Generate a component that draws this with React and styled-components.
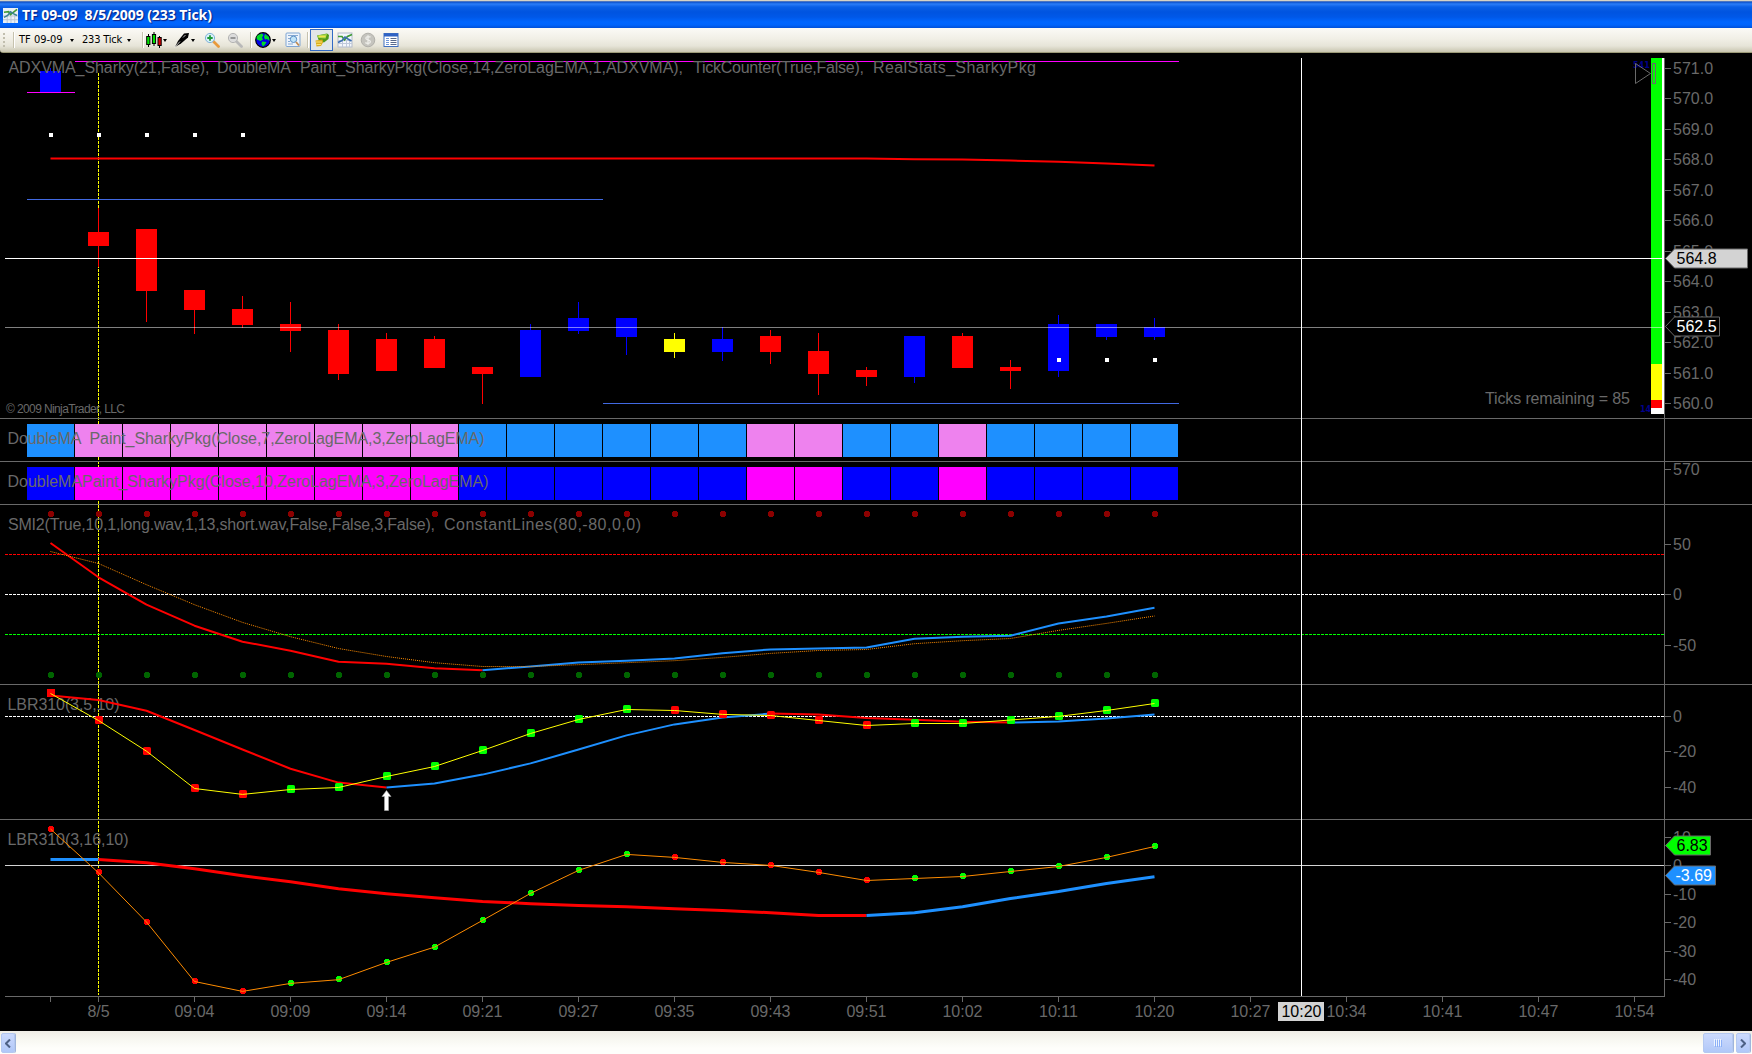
import React from "react";
import styled, { createGlobalStyle } from "styled-components";

const GlobalStyle = createGlobalStyle`
  body {
    margin: 0;
    background: #000;
    overflow: hidden;
    font-family: "Liberation Sans", Arial, sans-serif;
  }
`;

const GRAY = "#696969";
const BLUE = "#1e90ff";
const LIME = "#00ff00";

const Window = styled.div`
  display: flex;
  flex-direction: column;
  width: 1752px;
  height: 1054px;
  background: #000;
`;

const TitleBar = styled.header`
  display: flex;
  align-items: center;
  box-sizing: border-box;
  height: 28px;
  padding: 1px 0 0 3px;
  border-top: 1px solid #d6d3c6;
  background: linear-gradient(
    180deg,
    #8a99b8 0,
    #0d50c8 1px,
    #2b7df8 3px,
    #0a5fe6 6px,
    #0054e0 11px,
    #0058e8 16px,
    #0066ff 21px,
    #0064fc 24px,
    #0050d8 27px
  );
`;

const Title = styled.h1`
  margin: 0 0 0 4px;
  color: #fff;
  font-family: "Open Sans", "Noto Sans", sans-serif;
  font-size: 14px;
  font-weight: 700;
  line-height: 26px;
  letter-spacing: -0.07px;
  white-space: pre;
  text-shadow: 1px 1px 1px #0a1f80;
`;

const ToolBar = styled.nav`
  display: flex;
  align-items: center;
  box-sizing: border-box;
  height: 25px;
  padding-left: 3px;
  border-bottom: 1px solid #9c9a78;
  border-radius: 0 0 0 3px;
  background: linear-gradient(180deg, #fbfaf6 0, #f1efe6 45%, #e6e4d8 75%, #c9c6b0 100%);
`;

const Grip = styled.i`
  width: 2px;
  height: 15px;
  background: repeating-linear-gradient(180deg, #c1beae 0 2px, transparent 2px 4px);
`;

const Separator = styled.i`
  width: 1px;
  height: 16px;
  margin: 0 ${(p) => p.$right || 3}px 0 ${(p) => p.$left || 3}px;
  background: #c6c2ae;
  box-shadow: 1px 0 0 #fff;
`;

const ToolText = styled.span`
  width: ${(p) => p.$width}px;
  color: #000;
  font-family: "DejaVu Sans Condensed", "DejaVu Sans", sans-serif;
  font-size: 11px;
  line-height: 22px;
  letter-spacing: ${(p) => p.$spacing || 0}px;
  white-space: nowrap;
`;

const Caret = styled.i`
  width: 0;
  height: 0;
  margin: 1px ${(p) => p.$right}px 0 ${(p) => p.$left}px;
  border: 2.5px solid transparent;
  border-top: 3px solid #000;
  border-bottom: 0;
`;

const ToolButton = styled.span`
  display: flex;
  align-items: center;
  justify-content: center;
  box-sizing: border-box;
  width: ${(p) => (p.$active ? 23 : 17)}px;
  height: 22px;
  margin-right: ${(p) => p.$gap || 0}px;
  border: ${(p) => (p.$active ? "1px solid #316ac5" : "0")};
  background: ${(p) => (p.$active ? "#e1e6e8" : "none")};
`;

const Panels = styled.main`
  display: flex;
  flex-direction: column;
`;

const PanelRow = styled.section`
  display: flex;
  height: ${(p) => p.$height}px;
`;

const Canvas = styled.svg`
  display: block;
  flex: none;
`;

const Label = styled.text`
  fill: ${(p) => p.$color || GRAY};
  font-size: ${(p) => p.$size || 16}px;
  white-space: pre;
`;

const TinyLabel = styled.text`
  fill: #00008b;
  font-family: "DejaVu Sans", sans-serif;
  font-size: 8px;
  font-weight: 700;
`;

const ScrollBar = styled.footer`
  display: flex;
  align-items: center;
  box-sizing: border-box;
  height: 23px;
  padding: 1px 2px 0 1px;
  background: linear-gradient(180deg, #efede6 0, #f8f8f2 40%, #fefefb 75%);
`;

const ScrollPart = styled.span`
  display: flex;
  align-items: center;
  justify-content: center;
  box-sizing: border-box;
  width: ${(p) => p.$width}px;
  height: 20px;
  margin-left: ${(p) => p.$push || "0"};
  border: 1px solid #b4c8f0;
  border-radius: 2px;
  background: linear-gradient(180deg, #cbdafd, #bccffa 60%, #b0c8f8);
  box-shadow: 1px 0 0 #9fb5dc;
`;

// every bar is 48px apart
const barX = (i) => 50.5 + 48 * i;

// colour, body top, body bottom, high, low
const candles = [
  ["blue", 71, 92, 68, 92],
  ["red", 232, 246, 208, 267],
  ["red", 229, 291, 229, 322],
  ["red", 290, 310, 290, 334],
  ["red", 309, 325, 296, 328],
  ["red", 324, 331, 302, 352],
  ["red", 330, 374, 324, 380],
  ["red", 339, 371, 333, 371],
  ["red", 339, 368, 336, 368],
  ["red", 367, 374, 367, 404],
  ["blue", 330, 377, 324, 377],
  ["blue", 318, 331, 302, 334],
  ["blue", 318, 337, 318, 355],
  ["yellow", 339, 352, 333, 358],
  ["blue", 339, 352, 327, 361],
  ["red", 336, 352, 330, 364],
  ["red", 351, 374, 333, 395],
  ["red", 370, 377, 367, 386],
  ["blue", 336, 377, 336, 383],
  ["red", 336, 368, 333, 368],
  ["red", 367, 371, 360, 389],
  ["blue", 324, 371, 315, 377],
  ["blue", 324, 337, 324, 340],
  ["blue", 327, 337, 318, 340],
];

const average = [
  ...Array(18).fill(158.5),
  159.2, 159.5, 160.5, 161.8, 163.6, 165.5,
];

const paint = "BPPPPPPPPBBBBBBPPBBPBBBB".split("");
const dotColor = (i) => (i < 5 || (i > 12 && i < 18) ? "#ff0000" : LIME);

const smi = [
  543, 577.3, 604.7, 625.7, 641.7, 650.7, 661.7, 663.7, 668.3, 670.3, 666.4, 662.4,
  660.7, 658.5, 653.3, 649.4, 648.5, 647.4, 638.7, 636.7, 635.7, 623.5, 616.4, 607.7,
];
const smiAverage = [
  551.5, 563.5, 584.7, 604.7, 622.4, 636.7, 648.5, 656.5, 662.7, 666.5, 666.5, 664.7,
  662.7, 660.7, 657.4, 653.4, 650.5, 649.5, 643.7, 640.7, 638.5, 630.4, 623.4, 616,
];
const fast5 = [
  693.5, 720.5, 751.2, 788.5, 794.4, 789.5, 787.5, 776.5, 766.5, 750.5, 733.5, 719.5,
  709.5, 710.5, 714.4, 715.5, 720.5, 725.5, 723.5, 723.5, 720, 716.4, 710.5, 703.5,
];
const slow5 = [
  695.5, 700, 710.7, 730, 749.5, 768.7, 782.6, 787.5, 783.6, 774.6, 763.4, 749.5,
  735.4, 724.4, 717.6, 713.6, 714.6, 718, 719.7, 721.7, 722.6, 721.4, 718.5, 714.6,
];
const fast16 = [
  829, 872.8, 922, 981.5, 991.4, 983.4, 979.7, 962.4, 947.1, 920.4, 893.4, 870.4,
  854.4, 857.4, 862.4, 865.4, 872.4, 880.5, 878.5, 876.5, 871.5, 866.5, 857.4, 846.5,
];
const slow16 = [
  859.5, 859.5, 862.7, 868.7, 875.7, 881.7, 888.7, 893.7, 897.7, 901.4, 903.7, 905.5,
  906.7, 908.7, 910.5, 912.7, 915.5, 915.5, 912.7, 906.7, 898.5, 891.5, 883.4, 876.7,
];

const Series = ({ values, from = 0, to = 23, color, width = 1, dash }) => (
  <polyline
    points={values
      .slice(from, to + 1)
      .map((y, i) => `${barX(from + i)},${y}`)
      .join(" ")}
    fill="none"
    stroke={color}
    strokeWidth={width}
    strokeDasharray={dash}
    strokeLinejoin="round"
  />
);

const HLine = ({ y, x1 = 5, x2 = 1664, color, dash }) => (
  <line
    x1={x1}
    x2={x2}
    y1={y + 0.5}
    y2={y + 0.5}
    stroke={color}
    strokeDasharray={dash ? "3 1" : undefined}
    shapeRendering="crispEdges"
  />
);

const Dot = ({ i, y, color }) => (
  <circle cx={barX(i) + 0.5} cy={y} r="3" fill={color} shapeRendering="crispEdges" />
);

const Dots = ({ y, color }) => smi.map((_, i) => <Dot key={i} i={i} y={y} color={color} />);

// parts: [text, x, width]
const Caption = ({ y, parts }) =>
  parts.map(([text, x, width]) => (
    <Label key={x} x={x} y={y} textLength={width}>
      {text}
    </Label>
  ));

const Tag = ({ y, right, fill, color, text, x = 1677 }) => (
  <g>
    <path
      d={`M1665.5 ${y}L1674.5 ${y - 9.5}H${right}V${y + 9.5}H1674.5Z`}
      fill={fill}
      stroke={GRAY}
    />
    <Label x={x - 0.5} y={y + 5.5} $color={color}>
      {text}
    </Label>
  </g>
);

const Panel = ({ top, height, ticks = [], tags, last, children }) => (
  <PanelRow $height={height}>
    <Canvas width="1665" height={height} viewBox={`0 ${top} 1665 ${height}`}>
      <line
        x1="98.5"
        x2="98.5"
        y1="73"
        y2="995"
        stroke="#ffff00"
        strokeDasharray="3 1"
        shapeRendering="crispEdges"
      />
      {children}
      <HLine y={top + height - 1} x1={last ? 5 : 0} x2={1665} color={GRAY} />
      <path d="M1301.5 58V996" stroke="#fff" />
      <path d="M1664.5 58V997" stroke={GRAY} />
    </Canvas>
    <Canvas width="87" height={height} viewBox={`1665 ${top} 87 ${height}`}>
      {ticks.map(([text, y]) => (
        <g key={y}>
          <HLine y={y} x1={1665} x2={1671} color={GRAY} />
          <Label x="1673" y={y + 6}>
            {text}
          </Label>
        </g>
      ))}
      {!last && <HLine y={top + height - 1} x1={1665} x2={1752} color={GRAY} />}
      {tags}
    </Canvas>
  </PanelRow>
);

const priceTicks = [68, 98, 129, 159, 190, 220, 251, 281, 312, 342, 373, 403].map((y, i) => [
  `${571 - i}.0`,
  y,
]);

const PricePanel = () => (
  <Panel
    top={53}
    height={366}
    ticks={priceTicks}
    tags={
      <>
        <Tag y={258.5} right={1747.5} fill="#d3d3d3" color="#000" text="564.8" />
        <Tag y={326.5} right={1719.5} fill="#000" color="#fff" text="562.5" />
      </>
    }
  >
    {candles.map(([color, open, close, high, low], i) => (
      <g key={i} fill={color} shapeRendering="crispEdges">
        <rect x={barX(i) - 0.5} y={high} width="1" height={low - high} />
        <rect x={barX(i) - 10.5} y={open} width="21" height={close - open} />
      </g>
    ))}
    <HLine y={61} x1={75} x2={1179} color="#ff00ff" />
    <HLine y={92} x1={27} x2={75} color="#ff00ff" />
    <HLine y={199} x1={27} x2={603} color="#4169e1" />
    <HLine y={403} x1={603} x2={1179} color="#4169e1" />
    <Series values={average} color="#ff0000" width={2} />
    {[0, 1, 2, 3, 4].map((i) => (
      <rect key={i} x={barX(i) - 1.5} y="133" width="4" height="4" fill="#fff" />
    ))}
    {[21, 22, 23].map((i) => (
      <rect key={i} x={barX(i) - 1.5} y="358" width="4" height="4" fill="#fff" />
    ))}
    <Caption
      y={73}
      parts={[
        ["ADXVMA_Sharky(21,False),", 8.5, 201],
        ["DoubleMA", 217, 74],
        ["Paint_SharkyPkg(Close,14,ZeroLagEMA,1,ADXVMA),", 300, 383],
        ["TickCounter(True,False),", 693, 171],
        ["RealStats_SharkyPkg", 873, 163],
      ]}
    />
    <Label x="6" y="413" $size={12} textLength="119">
      © 2009 NinjaTrader, LLC
    </Label>
    <Label x="1485" y="404" textLength="145">
      Ticks remaining = 85
    </Label>
    <TinyLabel x="1633" y="67.5">541</TinyLabel>
    <TinyLabel x="1640" y="412">14</TinyLabel>
    <g shapeRendering="crispEdges">
      <rect x="1651" y="58" width="13" height="356" fill="#fff" />
      <rect x="1651" y="58" width="11" height="306" fill={LIME} />
      <rect x="1651" y="364" width="11" height="36" fill="#ffff00" />
      <rect x="1651" y="400" width="11" height="8" fill="#ff0000" />
    </g>
    <path d="M1635.5 63.5V83.5L1650.5 73.5Z" fill="none" stroke={GRAY} />
    <rect x="1652.5" y="63.5" width="3" height="20" fill="none" stroke={GRAY} />
    <HLine y={327} color="rgba(255, 255, 255, 0.5)" />
    <HLine y={258} color="#fff" />
  </Panel>
);

const PaintPanel = ({ top, colors, ticks, parts }) => (
  <Panel top={top} height={43} ticks={ticks}>
    {paint.map((kind, i) => (
      <g key={i}>
        <rect x={27 + 48 * i} y={top + 5} width="48" height="33" fill="#000" />
        <rect x={27 + 48 * i} y={top + 5} width="47" height="33" fill={colors[kind]} />
      </g>
    ))}
    <Caption y={top + 25} parts={parts} />
  </Panel>
);

const SmiPanel = () => (
  <Panel
    top={505}
    height={180}
    ticks={[
      ["50", 544],
      ["0", 594],
      ["-50", 645],
    ]}
  >
    <Caption
      y={530}
      parts={[
        ["SMI2(True,10,1,long.wav,1,13,short.wav,False,False,3,False),", 8, 427],
        ["ConstantLines(80,-80,0,0)", 444, 197],
      ]}
    />
    <HLine y={554} color="#ff0000" dash />
    <HLine y={594} color="#fff" dash />
    <HLine y={634} color={LIME} dash />
    <Dots y={514} color="#8b0000" />
    <Dots y={675} color="#006400" />
    <Series values={smi} to={9} color="#ff0000" width={2} />
    <Series values={smi} from={9} color={BLUE} width={2} />
    <Series values={smiAverage} color="#ff8c00" dash="1 1" />
  </Panel>
);

const Lbr5Panel = () => (
  <Panel
    top={685}
    height={135}
    ticks={[
      ["0", 716],
      ["-20", 751],
      ["-40", 787],
    ]}
  >
    <Caption y={710} parts={[["LBR310(3,5,10)", 7.5, 112]]} />
    <HLine y={716} color="#fff" dash />
    <Series values={slow5} to={7} color="#ff0000" width={2} />
    <Series values={slow5} from={7} to={15} color={BLUE} width={2} />
    <Series values={slow5} from={15} to={20} color="#ff0000" width={2} />
    <Series values={slow5} from={20} color={BLUE} width={2} />
    {fast5.map((y, i) => (
      <rect
        key={i}
        x={barX(i) - 3.5}
        y={Math.round(y - 4.5)}
        width="8"
        height="8"
        rx={i === 0 ? 0 : 1.6}
        fill={dotColor(i)}
      />
    ))}
    <Series values={fast5} color="#ffff00" />
    <path
      d="M386.5 790.5L391 796.5H388.5V810.5H384.5V796.5H382Z"
      fill="#fff"
      stroke="#a9a9a9"
      strokeWidth="0.6"
    />
  </Panel>
);

const Lbr16Panel = () => (
  <Panel
    top={820}
    height={177}
    last
    ticks={[
      ["10", 837],
      ["0", 865],
      ["-10", 894],
      ["-20", 922],
      ["-30", 951],
      ["-40", 979],
    ]}
    tags={
      <>
        <Tag y={845.5} right={1710.5} fill={LIME} color="#000" text="6.83" />
        <Tag y={875.5} right={1715.5} fill={BLUE} color="#fff" text="-3.69" x={1676} />
      </>
    }
  >
    <Caption y={845} parts={[["LBR310(3,16,10)", 7.5, 121]]} />
    <HLine y={865} color="#d3d3d3" />
    <Series values={slow16} to={1} color={BLUE} width={3} />
    <Series values={slow16} from={1} to={17} color="#ff0000" width={3} />
    <Series values={slow16} from={17} color={BLUE} width={3} />
    {fast16.map((y, i) => (
      <Dot key={i} i={i} y={Math.floor(y)} color={dotColor(i)} />
    ))}
    <Series values={fast16} color="#ff8c00" />
  </Panel>
);

const times = [
  "8/5", "09:04", "09:09", "09:14", "09:21", "09:27", "09:35", "09:43", "09:51",
  "10:02", "10:11", "10:20", "10:27", "10:34", "10:41", "10:47", "10:54",
];

const timeX = (i) => 98.5 + 96 * i;

const TimeAxis = () => (
  <Canvas width="1752" height="34" viewBox="0 997 1752 34">
    <path d="M50.5 997V1002" stroke={GRAY} />
    {times.map((time, i) => (
      <g key={time}>
        <path d={`M${timeX(i)} 997V1002`} stroke={GRAY} />
        <Label x={timeX(i)} y="1016.5" textAnchor="middle">
          {time}
        </Label>
      </g>
    ))}
    <rect x="1278" y="1002" width="46" height="19" fill="#d3d3d3" />
    <Label x="1301.5" y="1016.5" textAnchor="middle" $color="#000">
      10:20
    </Label>
  </Canvas>
);

const Icon = ({ size = 16, children }) => (
  <svg width={size} height={size} viewBox="0 0 16 16">
    {children}
  </svg>
);

const ChartIcon = () => (
  <Icon>
    <rect x="1" y="1" width="14" height="14" fill="#f4f7fb" stroke="#b4bccb" />
    <path d="M1 8.5H15M1 11.5H15M5.5 8V15M9.5 8V15M12.5 8V15" stroke="#bfc9dc" />
    <path d="M1 4.5H5L7.5 8L10.5 4.5L15 2.5" fill="none" stroke="#3f9a35" strokeWidth="1.6" />
    <path d="M1 10.5L5 8.5L8 5L11 7L14.5 9" fill="none" stroke="#3d6fb0" strokeWidth="1.6" />
  </Icon>
);

const CandlesIcon = () => (
  <Icon>
    <path d="M2.5 2V15M8 0V14M13.5 4V16" stroke="#000" />
    <rect x="0.7" y="4.5" width="3.2" height="8" fill="#00e000" stroke="#000" />
    <rect x="6.4" y="2.5" width="3.2" height="9" fill="#00e000" stroke="#000" />
    <rect x="12" y="5.5" width="3.2" height="8" fill="#e00000" stroke="#000" />
  </Icon>
);

const PenIcon = () => (
  <Icon>
    <path d="M1 15L4 9L10 1.5L15 1L14 5.5L7 11.5Z" fill="#000" />
    <path d="M0.5 15.5L6 9.5" stroke="#e8e8e8" strokeWidth="0.8" />
    <path d="M9 5.5L11.5 3" stroke="#bbb" />
  </Icon>
);

const ZoomIcon = ({ out }) => (
  <Icon>
    <path
      d="M9.5 9.5L14.5 14.5"
      stroke={out ? "#b9b9b9" : "#e89a3c"}
      strokeWidth="2.8"
      strokeLinecap="round"
    />
    <circle
      cx="6"
      cy="6"
      r="4.6"
      fill={out ? "#dcdcdc" : "#d9f0fa"}
      stroke={out ? "#b4b4b4" : "#7fb2d8"}
    />
    <path
      d={out ? "M3.5 6H8.5" : "M3.3 6H8.7M6 3.3V8.7"}
      stroke={out ? "#8e8e8e" : "#1d9a3a"}
      strokeWidth="1.8"
    />
  </Icon>
);

const GlobeIcon = () => (
  <Icon>
    <circle cx="8" cy="8" r="7.3" fill="#0000e6" stroke="#000" strokeWidth="1.2" />
    <path d="M3 3L7 1.5L8.5 3L7 5.5L8 7.5L5.5 9L2 7.5L1.5 5Z" fill="#00dc28" />
    <path d="M10 2L14 5L14.5 9L12 7L10 7.5L9 5Z" fill="#00dc28" />
    <path d="M7 9.5L11.5 10L10 12.5L8 14.5L6.5 12Z" fill="#00dc28" />
  </Icon>
);

const PreviewIcon = () => (
  <Icon>
    <rect x="1" y="1" width="14" height="13.5" rx="1" fill="#eef4fb" stroke="#7fa5d3" />
    <path d="M3 3.5H13M3 6.5H5M3 9.5H5M3 12H8" stroke="#86a9d2" />
    <circle cx="8.5" cy="7.3" r="3.2" fill="#bfe3f7" stroke="#5b8fc6" />
    <path d="M11 10L14 13.5" stroke="#c08a50" strokeWidth="1.8" />
  </Icon>
);

const TraderIcon = () => (
  <Icon>
    <path d="M3 3.5L13 1.5L15 3L14.5 7L10 10.5L5 9Z" fill="#4f9a18" />
    <path d="M3 3.5L13 2L11.5 6.5L4.5 6Z" fill="#a9d84a" />
    <path d="M1.5 8.5L8.5 7.5L9 10.5L7 14L2.5 14.5Z" fill="#dcae1c" />
    <path d="M2 10H8M2.5 12.5H7" stroke="#f8e27a" />
    <path d="M5 4.5H11.5" stroke="#f1e44a" strokeWidth="1.4" />
  </Icon>
);

const DollarIcon = () => (
  <Icon>
    <circle cx="8" cy="8" r="6.8" fill="#c5c4be" stroke="#b1b0aa" />
    <path
      d="M10.5 5.3C9.5 4.2 5.8 4.3 5.8 6.2C5.8 8.3 10.4 7.4 10.4 9.7C10.4 11.7 6.4 11.8 5.4 10.5M8 3.2V12.8"
      fill="none"
      stroke="#eeeeea"
      strokeWidth="1.3"
    />
  </Icon>
);

const TableIcon = () => (
  <Icon>
    <rect x="1" y="1.5" width="14" height="13" fill="#fff" stroke="#3f6fc0" />
    <rect x="1" y="1.5" width="14" height="3" fill="#2f62c4" />
    <path d="M3 6.5H6M3 8.5H6M3 10.5H6M3 12.5H6" stroke="#6f97d8" />
    <path d="M7.5 6.5H13.5M7.5 8.5H13.5M7.5 10.5H13.5M7.5 12.5H13.5" stroke="#58698a" />
  </Icon>
);

const App = () => {
  return (
    <>
      <GlobalStyle />
      <Window>
        <TitleBar>
          <Icon size={15}>
            <rect width="16" height="16" fill="#eaf0f6" />
            <path d="M0 8.5H16M0 12.5H16M4.5 7V16M8.5 7V16M12.5 7V16" stroke="#b8c3cf" />
            <path d="M1 4.5L6 4L8 7L15 1.5" fill="none" stroke="#3f9a35" strokeWidth="1.8" />
            <path d="M1 10L5 8L8 4L11 6L15 8" fill="none" stroke="#3a8292" strokeWidth="1.6" />
          </Icon>
          <Title>{"TF 09-09  8/5/2009 (233 Tick)"}</Title>
        </TitleBar>
        <ToolBar>
          <Grip />
          <Separator $left={8} $right={5} />
          <ToolText $width={50}>TF 09-09</ToolText>
          <Caret $left={1} $right={8} />
          <ToolText $width={45} $spacing={-0.2}>
            233 Tick
          </ToolText>
          <Caret $left={0} $right={8} />
          <Separator $left={0} $right={2} />
          <ToolButton>
            <CandlesIcon />
          </ToolButton>
          <Caret $left={1} $right={6} />
          <ToolButton>
            <PenIcon />
          </ToolButton>
          <Caret $left={1} $right={8} />
          <ToolButton $gap={6}>
            <ZoomIcon />
          </ToolButton>
          <ToolButton>
            <ZoomIcon out />
          </ToolButton>
          <Separator $left={7} $right={3} />
          <ToolButton>
            <GlobeIcon />
          </ToolButton>
          <Caret $left={1} $right={8} />
          <ToolButton>
            <PreviewIcon />
          </ToolButton>
          <Separator $left={6} $right={2} />
          <ToolButton $active $gap={3}>
            <TraderIcon />
          </ToolButton>
          <ToolButton $gap={6}>
            <ChartIcon />
          </ToolButton>
          <ToolButton $gap={6}>
            <DollarIcon />
          </ToolButton>
          <ToolButton>
            <TableIcon />
          </ToolButton>
        </ToolBar>
        <Panels>
          <PricePanel />
          <PaintPanel
            top={419}
            colors={{ B: BLUE, P: "#ee82ee" }}
            parts={[
              ["DoubleMA", 7.5, 74],
              ["Paint_SharkyPkg(Close,7,ZeroLagEMA,3,ZeroLagEMA)", 89.5, 395],
            ]}
          />
          <PaintPanel
            top={462}
            colors={{ B: "#0000ff", P: "#ff00ff" }}
            ticks={[["570", 469]]}
            parts={[["DoubleMAPaint_SharkyPkg(Close,10,ZeroLagEMA,3,ZeroLagEMA)", 7.5, 481]]}
          />
          <SmiPanel />
          <Lbr5Panel />
          <Lbr16Panel />
          <TimeAxis />
        </Panels>
        <ScrollBar>
          <ScrollPart $width={14}>
            <svg width="6" height="9" viewBox="0 0 6 9">
              <path d="M5 0.5L1 4.5L5 8.5" fill="none" stroke="#4d6185" strokeWidth="2" />
            </svg>
          </ScrollPart>
          <ScrollPart $width={30} $push="auto">
            <svg width="9" height="8" viewBox="0 0 9 8">
              <path d="M0.5 0V7M2.5 0V7M4.5 0V7M6.5 0V7" stroke="#eef4fe" />
              <path d="M1.5 1V8M3.5 1V8M5.5 1V8M7.5 1V8" stroke="#8cb0f8" />
            </svg>
          </ScrollPart>
          <ScrollPart $width={14} $push="3px">
            <svg width="6" height="9" viewBox="0 0 6 9">
              <path d="M1 0.5L5 4.5L1 8.5" fill="none" stroke="#4d6185" strokeWidth="2" />
            </svg>
          </ScrollPart>
        </ScrollBar>
      </Window>
    </>
  );
};

export default App;
